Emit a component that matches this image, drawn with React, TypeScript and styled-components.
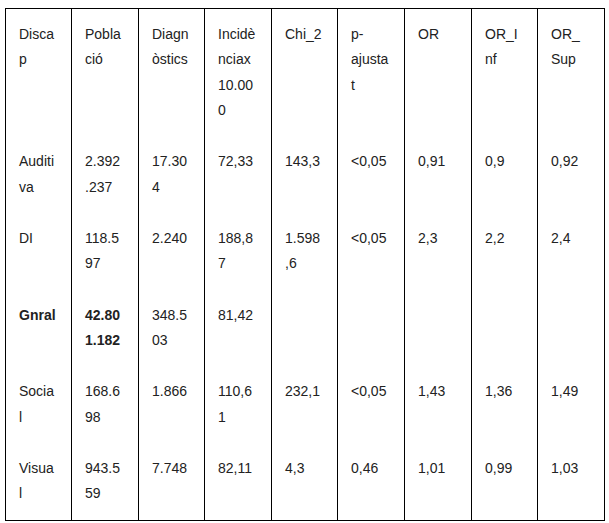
import * as React from "react";
import styled, { createGlobalStyle } from "styled-components";

const GlobalStyle = createGlobalStyle`
  html, body {
    margin: 0;
    padding: 0;
    background: #ffffff;
  }
`;

const SPage = styled.div`
  padding: 8px 0 0 5px;
`;

const COLUMN_WIDTHS = [66, 67, 66, 67, 66, 67, 67, 66, 66];

const STable = styled.div`
  display: grid;
  grid-template-columns: ${COLUMN_WIDTHS.map((w) => `${w}px`).join(" ")};
  width: 600px;
  box-sizing: border-box;
  border: 1px solid #000000;
  font-family: "Liberation Sans", Arial, sans-serif;
  font-size: 14px;
  line-height: 25.35px;
  color: #222222;
`;

interface ICellProps {
  $bold?: boolean;
  $last?: boolean;
}

const SCell = styled.div<ICellProps>`
  box-sizing: border-box;
  padding: 13px 15px 13px 13px;
  border-right: ${({ $last }) => ($last ? "none" : "1px solid #000000")};
  font-weight: ${({ $bold }) => ($bold ? 700 : 400)};
  overflow-wrap: break-word;
  word-wrap: break-word;
  min-width: 0;
`;

interface IRow {
  cells: string[];
  bold?: number[];
}

const HEADER = [
  "Discap",
  "Població",
  "Diagnòstics",
  "Incidènciax10.000",
  "Chi_2",
  "p-ajustat",
  "OR",
  "OR_Inf",
  "OR_Sup",
];

const ROWS: IRow[] = [
  { cells: ["Auditiva", "2.392.237", "17.304", "72,33", "143,3", "<0,05", "0,91", "0,9", "0,92"] },
  { cells: ["DI", "118.597", "2.240", "188,87", "1.598,6", "<0,05", "2,3", "2,2", "2,4"] },
  { cells: ["Gnral", "42.801.182", "348.503", "81,42", "", "", "", "", ""], bold: [0, 1] },
  { cells: ["Social", "168.698", "1.866", "110,61", "232,1", "<0,05", "1,43", "1,36", "1,49"] },
  { cells: ["Visual", "943.559", "7.748", "82,11", "4,3", "0,46", "1,01", "0,99", "1,03"] },
];

export default function App() {
  const rows: IRow[] = [{ cells: HEADER }, ...ROWS];
  return (
    <>
      <GlobalStyle />
      <SPage>
        <STable>
          {rows.map((row, r) =>
            row.cells.map((text, c) => (
              <SCell
                key={`${r}-${c}`}
                $bold={row.bold?.includes(c)}
                $last={c === row.cells.length - 1}
              >
                {text}
              </SCell>
            ))
          )}
        </STable>
      </SPage>
    </>
  );
}
